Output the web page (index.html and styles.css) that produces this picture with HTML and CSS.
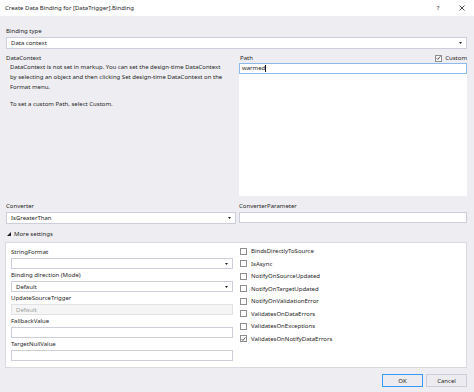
FILE: index.html
```html
<!DOCTYPE html>
<html>
<head>
<meta charset="utf-8">
<link rel="stylesheet" href="styles.css">
</head>
<body>
<div class="window">
  <div class="titlebar">
    <span class="title">Create Data Binding for [DataTrigger].Binding</span>
    <span class="help">?</span>
    <span class="close"><svg width="6" height="6" viewBox="0 0 6 6"><path d="M0.5 0.5L5.5 5.5M5.5 0.5L0.5 5.5" stroke="#1e1e1e" stroke-width="0.8" fill="none"/></svg></span>
  </div>
  <div class="content">
    <div class="label">Binding type</div>
    <div class="combo"><span>Data context</span><svg class="arrow" width="3" height="2" viewBox="0 0 3 2"><path d="M0 0H3L1.5 2Z" fill="#1e1e1e"/></svg></div>

    <div class="two top">
      <div class="col-left">
        <div class="label">DataContext</div>
        <div class="desc">
          <p>DataContext is not set in markup. You can set the design-time DataContext<br>by selecting an object and then clicking Set design-time DataContext on the<br>Format menu.</p>
          <p class="gap">To set a custom Path, select Custom.</p>
        </div>
      </div>
      <div class="col-right">
        <div class="label pathrow"><span>Path</span><span class="custom"><span class="cb checked"><svg width="6" height="6" viewBox="0 0 6 6"><path d="M0.8 3.2L2.3 4.7L5.2 1" stroke="#1e1e1e" stroke-width="0.9" fill="none"/></svg></span>Custom</span></div>
        <div class="pathbox">
          <div class="input focused">warmed<span class="caret"></span></div>
        </div>
      </div>
    </div>

    <div class="two conv">
      <div class="col-left">
        <div class="label">Converter</div>
        <div class="combo"><span>IsGreaterThan</span><svg class="arrow" width="3" height="2" viewBox="0 0 3 2"><path d="M0 0H3L1.5 2Z" fill="#1e1e1e"/></svg></div>
      </div>
      <div class="col-right">
        <div class="label">ConverterParameter</div>
        <div class="input plain"></div>
      </div>
    </div>

    <div class="label more"><svg class="tri" width="4" height="4" viewBox="0 0 4 4"><path d="M4 0V4H0Z" fill="#1e1e1e"/></svg>More settings</div>

    <div class="panel">
      <div class="panel-left">
        <div class="label">StringFormat</div>
        <div class="combo field"><span></span><svg class="arrow" width="3" height="2" viewBox="0 0 3 2"><path d="M0 0H3L1.5 2Z" fill="#1e1e1e"/></svg></div>
        <div class="label">Binding direction (Mode)</div>
        <div class="combo field"><span>Default</span><svg class="arrow" width="3" height="2" viewBox="0 0 3 2"><path d="M0 0H3L1.5 2Z" fill="#1e1e1e"/></svg></div>
        <div class="label">UpdateSourceTrigger</div>
        <div class="combo field disabled"><span>Default</span></div>
        <div class="label">FallbackValue</div>
        <div class="input field"></div>
        <div class="label">TargetNullValue</div>
        <div class="input field"></div>
      </div>
      <div class="panel-right">
        <div class="cbrow"><span class="cb"></span>BindsDirectlyToSource</div>
        <div class="cbrow"><span class="cb"></span>IsAsync</div>
        <div class="cbrow"><span class="cb"></span>NotifyOnSourceUpdated</div>
        <div class="cbrow"><span class="cb"></span>NotifyOnTargetUpdated</div>
        <div class="cbrow"><span class="cb"></span>NotifyOnValidationError</div>
        <div class="cbrow"><span class="cb"></span>ValidatesOnDataErrors</div>
        <div class="cbrow"><span class="cb"></span>ValidatesOnExceptions</div>
        <div class="cbrow"><span class="cb checked"><svg width="6" height="6" viewBox="0 0 6 6"><path d="M0.8 3.2L2.3 4.7L5.2 1" stroke="#1e1e1e" stroke-width="0.9" fill="none"/></svg></span>ValidatesOnNotifyDataErrors</div>
      </div>
    </div>

    <div class="buttons">
      <div class="btn default">OK</div>
      <div class="btn">Cancel</div>
    </div>
  </div>
</div>
</body>
</html>
```

FILE: styles.css
```css
* {
  box-sizing: border-box;
  margin: 0;
  padding: 0;
}

html, body {
  width: 474px;
  height: 392px;
  overflow: hidden;
}

body {
  font-family: "Noto Sans", "Open Sans", sans-serif;
  font-size: 6px;
  color: #1e1e1e;
  background: #eeeef2;
}

.window {
  display: flex;
  flex-direction: column;
  height: 392px;
}

.titlebar {
  height: 16px;
  background: #ffffff;
  display: flex;
  align-items: center;
  padding-left: 5px;
  line-height: 10px;
}

.title {
  flex: 1;
  white-space: nowrap;
}

.help {
  width: 24px;
  text-align: center;
}

.close {
  width: 24px;
  display: flex;
  justify-content: center;
}

.content {
  display: flex;
  flex-direction: column;
  padding: 10px 7px 0 6px;
}

.label {
  height: 10px;
  line-height: 10px;
  white-space: nowrap;
}

.combo {
  height: 12px;
  margin-top: 1px;
  background: #ffffff;
  border: 1px solid #cccedb;
  display: flex;
  align-items: center;
  padding: 0 4px 0 4px;
  white-space: nowrap;
}

.arrow {
  margin-left: auto;
}

.two {
  display: flex;
  gap: 3px;
}

.two.top {
  margin-top: 4px;
}

.two.conv {
  margin-top: 5px;
}

.col-left {
  width: 230px;
  display: flex;
  flex-direction: column;
}

.col-right {
  flex: 1;
  display: flex;
  flex-direction: column;
}

.desc {
  padding-left: 4px;
  margin-top: -1px;
  line-height: 10px;
  white-space: nowrap;
}

.desc .gap {
  margin-top: 7px;
}

.pathrow {
  display: flex;
  justify-content: space-between;
  padding-left: 1px;
}

.custom {
  display: flex;
  align-items: center;
  gap: 3px;
}

.cb {
  width: 7px;
  height: 7px;
  border: 1px solid #8e8e8e;
  background: #ffffff;
  display: inline-flex;
  align-items: center;
  justify-content: center;
  flex: none;
}

.pathbox {
  height: 133px;
  background: #ffffff;
}

.input {
  height: 11px;
  border: 1px solid #cccedb;
  background: #ffffff;
  line-height: 9px;
  padding-left: 2px;
  white-space: nowrap;
}

.input.focused {
  border-color: #8dbbe9;
  display: flex;
  align-items: center;
}

.caret {
  display: inline-block;
  width: 1px;
  height: 7px;
  background: #1e1e1e;
}

.input.plain {
  margin-top: 1px;
  height: 11px;
}

.more {
  margin-top: 5px;
  display: flex;
  align-items: center;
  gap: 3px;
  padding-left: 1px;
}

.panel {
  margin: 3px 0 0 -1px;
  height: 126px;
  background: #ffffff;
  border: 1px solid #dadae2;
  display: flex;
}

.panel-left {
  width: 233px;
  padding: 4px 0 0 5px;
  display: flex;
  flex-direction: column;
}

.field {
  width: 222px;
  height: 11px;
  margin: 1px 0 1px 0;
}

.combo.disabled {
  background: #f5f5f5;
  color: #a0a0a0;
  border-color: #e2e2e6;
}

.panel-right {
  flex: 1;
  padding: 2px 0 0 1px;
}

.cbrow {
  height: 12.5px;
  display: flex;
  align-items: center;
  gap: 4px;
  white-space: nowrap;
}

.buttons {
  display: flex;
  justify-content: flex-end;
  gap: 3px;
  margin-top: 6px;
}

.btn {
  width: 41px;
  height: 13px;
  border: 1px solid #cccedb;
  background: #ececf0;
  display: flex;
  align-items: center;
  justify-content: center;
}

.btn.default {
  border-color: #3399ff;
}
```
